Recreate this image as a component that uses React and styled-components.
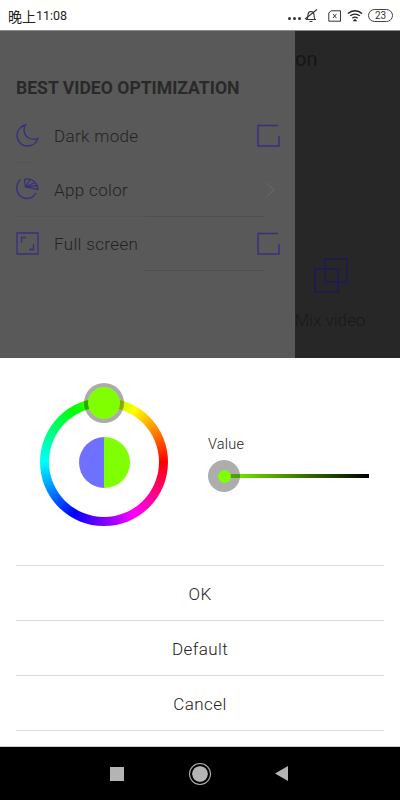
import React from 'react';
import styled, { createGlobalStyle } from 'styled-components';

const GlobalStyle = createGlobalStyle`
  html, body {
    margin: 0;
    padding: 0;
    background: #fff;
    font-family: Roboto, "Noto Sans CJK SC", sans-serif;
  }
  * { box-sizing: border-box; }
`;

const Screen = styled.div`
  width: 400px;
  height: 800px;
  display: flex;
  flex-direction: column;
  overflow: hidden;
`;

/* status bar */
const StatusBar = styled.div`
  height: 30px;
  flex: none;
  display: flex;
  align-items: center;
  padding: 1px 7px 0 8px;
  background: #fff;
  color: #222;
`;

const Clock = styled.span`
  font-size: 14px;
  display: flex;
  align-items: center;
`;

const ClockDigits = styled.span`
  font-size: 12.5px;
  letter-spacing: 0;
`;

const StatusIcons = styled.div`
  margin-left: auto;
  display: flex;
  align-items: center;
`;

const Dots = styled.span`
  display: flex;
  gap: 2px;
  margin-right: 3px;
  margin-top: 6px;
  > i {
    width: 3px;
    height: 3px;
    border-radius: 50%;
    background: #333;
  }
`;

const StatusGap = styled.span`
  width: ${(p) => p.$w}px;
`;

const Battery = styled.span`
  width: 25px;
  height: 13px;
  margin-left: 5px;
  border: 1px solid #444;
  border-radius: 7px;
  font-size: 10px;
  line-height: 11px;
  text-align: center;
  color: #333;
`;

/* dimmed page behind the sheet */
const Backdrop = styled.div`
  height: 328px;
  flex: none;
  display: flex;
  border-top: 1px solid #8a8a8a;
`;

const Drawer = styled.div`
  width: 295px;
  flex: none;
  padding: 45px 16px 0;
  background: #595959;
`;

const DrawerTitle = styled.div`
  height: 24px;
  margin-bottom: 9px;
  font-size: 17.6px;
  font-weight: 700;
  line-height: 24px;
  color: #292929;
`;

const OptionRow = styled.div`
  height: 54px;
  position: relative;
  display: flex;
  align-items: center;
  width: 248px;
  padding-bottom: 1px;
  &::after {
    content: '';
    position: absolute;
    left: ${(p) => p.$lineFrom}px;
    right: ${(p) => p.$lineEnd}px;
    bottom: 0;
    height: 1px;
    background: ${(p) => p.$lineColor};
  }
`;

const OptionIcon = styled.svg`
  width: 23px;
  height: 23px;
  flex: none;
  fill: none;
  stroke: #37317c;
  stroke-width: 1.3;
`;

const OptionLabel = styled.span`
  margin-left: 15px;
  font-size: 17px;
  font-weight: 300;
  letter-spacing: 0.35px;
  color: #232323;
`;

const OptionEnd = styled.svg`
  position: absolute;
  left: 240px;
  top: 50%;
  margin-top: -12px;
  width: 24px;
  height: 24px;
  fill: none;
  stroke: ${(p) => p.$stroke};
  stroke-width: 1.5;
`;

const PageRest = styled.div`
  flex: 1;
  display: flex;
  flex-direction: column;
  overflow: hidden;
  background: #272727;
  color: #191919;
`;

const PageTitle = styled.div`
  height: 60px;
  padding-top: 15px;
  font-size: 20px;
  line-height: 26px;
  color: #161616;
`;

const MixTile = styled.div`
  margin-top: 167px;
  margin-left: -1px;
  display: flex;
  flex-direction: column;
  align-items: center;
  width: 72px;
  font-size: 17px;
  font-weight: 300;
  white-space: nowrap;
  svg {
    width: 34px;
    height: 35px;
    fill: none;
    stroke: #1f1b4d;
    stroke-width: 2;
    margin-bottom: 17px;
    margin-left: 2px;
  }
`;

/* colour picker sheet */
const Sheet = styled.div`
  flex: 1;
  background: #fff;
  display: flex;
  flex-direction: column;
`;

const Picker = styled.div`
  height: 207px;
  flex: none;
  display: flex;
`;

const Wheel = styled.div`
  position: relative;
  width: 128px;
  height: 128px;
  margin: 40px 0 0 40px;
  flex: none;
  display: flex;
  align-items: center;
  justify-content: center;
  border-radius: 50%;
  background: conic-gradient(
    #80ff00 0deg,
    #ffff00 30deg,
    #ff8000 60deg,
    #ff0000 90deg,
    #ff00ff 150deg,
    #0000ff 210deg,
    #00ffff 270deg,
    #00ff00 330deg,
    #80ff00 360deg
  );
  &::before {
    content: '';
    position: absolute;
    inset: 9px;
    border-radius: 50%;
    background: #fff;
  }
`;

const WheelThumb = styled.div`
  position: absolute;
  left: 44px;
  top: -15px;
  width: 40px;
  height: 40px;
  border-radius: 50%;
  background: #7fff00;
  background-clip: padding-box;
  border: 4.5px solid rgba(0, 0, 0, 0.33);
`;

const Preview = styled.div`
  position: relative;
  width: 51px;
  height: 51px;
  border-radius: 50%;
  background: linear-gradient(90deg, #7070ff 50%, #7fff00 50%);
`;

const ValueBox = styled.div`
  flex: 1;
  padding: 78px 31px 0 40px;
`;

const ValueLabel = styled.div`
  height: 18px;
  font-size: 14.5px;
  font-weight: 300;
  line-height: 18px;
  letter-spacing: 0.2px;
  color: #222;
`;

const ValueTrack = styled.div`
  position: relative;
  height: 4px;
  margin-top: 20px;
  margin-left: 15px;
`;

const ValueFill = styled.div`
  position: absolute;
  inset: 0;
  background: linear-gradient(90deg, #7fff00, #000);
`;

const ValueThumb = styled.div`
  position: absolute;
  left: -15px;
  top: -14px;
  width: 32px;
  height: 32px;
  border-radius: 50%;
  display: flex;
  align-items: center;
  justify-content: center;
  background: rgba(0, 0, 0, 0.32);
  &::after {
    content: '';
    width: 13px;
    height: 13px;
    border-radius: 50%;
    background: #7fff00;
  }
`;

const ActionList = styled.div`
  margin: 0 16px;
  border-top: 1px solid #dcdcdc;
`;

const Action = styled.div`
  height: 55px;
  padding-top: 2px;
  display: flex;
  align-items: center;
  justify-content: center;
  border-bottom: 1px solid #dcdcdc;
  font-size: 17px;
  font-weight: 300;
  letter-spacing: 0.4px;
  color: #222;
`;

/* android nav bar */
const NavBar = styled.div`
  height: 54px;
  flex: none;
  background: #000;
  border-top: 1px solid #ccc;
  display: flex;
  align-items: center;
  gap: 65.5px;
  padding-left: 110px;
`;

const NavSquare = styled.div`
  width: 14px;
  height: 14px;
  background: #b4b4b4;
`;

const NavHome = styled.div`
  width: 20px;
  height: 20px;
  border-radius: 50%;
  background: #b4b4b4;
  background-clip: padding-box;
  border: 2px solid #000;
  box-shadow: 0 0 0 1px #b4b4b4;
`;

const NavBack = styled.svg`
  width: 13px;
  height: 15px;
  fill: #b4b4b4;
`;

const BellOff = () => (
  <svg width="14" height="15" viewBox="0 0 14 15" fill="none" stroke="#333" strokeWidth="1.1">
    <path d="M2 11.500h10M3 11.500c1-1.500 .8-3 1-5 .2-1.800 1.500-3 3-3s2.800 1 3 3c.1 1.500 0 3.500 1 5M5.500 13.500h3" />
    <path d="M1 11 13 1.500" />
  </svg>
);

const SimX = () => (
  <svg width="13" height="12" viewBox="0 0 13 12" fill="none" stroke="#333" strokeWidth="1">
    <path d="M3 .8h9.500v10.400H.8V3z" />
    <path d="M5 4 8.400 8M8.400 4 5 8" />
  </svg>
);

const Wifi = () => (
  <svg width="16" height="13" viewBox="0 0 17 13" fill="none" stroke="#222" strokeWidth="1.4">
    <path d="M1 4.300c4.300-3.800 10.700-3.800 15 0M3.300 6.900c3-2.600 7.400-2.600 10.400 0M5.700 9.400c1.600-1.300 4-1.300 5.600 0" />
    <path d="M8.500 11 7.700 11.800h1.600z" fill="#222" />
  </svg>
);

const Moon = () => (
  <OptionIcon viewBox="0 0 23 23">
    <path d="M9.500 1C4.500 2 1 6.200 1 11.500 1 17.300 5.700 22 11.500 22c4.800 0 9-3.100 10.500-7.500-1.200.6-2.600.9-4 .9-5.500 0-10-4-10-9.400 0-1.800.6-3.700 1.500-5z" />
  </OptionIcon>
);

const Palette = () => (
  <OptionIcon viewBox="0 0 23 23">
    <path d="M4.500 1.500C2 3.500.8 7 .8 10.500c0 5.500 4.500 10 10 10 3.800 0 7.200-2 9-5.500" />
    <path d="M9.500 9 8.500 1.500C13.500-.5 21 3 22 11.500z" />
    <path d="M9.500 9 14 1.500M9.500 9 19 4.500M9.500 9 22 7.500" />
  </OptionIcon>
);

const FullFrame = () => (
  <OptionIcon viewBox="0 0 23 23">
    <path d="M1 1h21v21H1z" />
    <path d="M10 5.500H5.500V11M13 17.500h4.500V12" />
  </OptionIcon>
);

const CheckBox = () => (
  <OptionEnd viewBox="0 0 24 24" $stroke="#37317c">
    <path d="M22 1.500H2v20.500h21V12" />
  </OptionEnd>
);

const Chevron = () => (
  <OptionEnd viewBox="0 0 24 24" $stroke="#646464">
    <path d="M10 5l8 7-8 7" />
  </OptionEnd>
);

const App = () => (
  <Screen>
    <GlobalStyle />
    <StatusBar>
      <Clock>
        晚上<ClockDigits>11:08</ClockDigits>
      </Clock>
      <StatusIcons>
        <Dots>
          <i />
          <i />
          <i />
        </Dots>
        <BellOff />
        <StatusGap $w={10} />
        <SimX />
        <StatusGap $w={6} />
        <Wifi />
        <Battery>23</Battery>
      </StatusIcons>
    </StatusBar>

    <Backdrop>
      <Drawer>
        <DrawerTitle>BEST VIDEO OPTIMIZATION</DrawerTitle>
        <OptionRow $lineFrom={0} $lineEnd={232} $lineColor="#535353">
          <Moon />
          <OptionLabel>Dark mode</OptionLabel>
          <CheckBox />
        </OptionRow>
        <OptionRow
          $lineFrom={0}
          $lineEnd={0}
          $lineColor="linear-gradient(90deg, #555 52%, #4e4e4e 52%)"
        >
          <Palette />
          <OptionLabel>App color</OptionLabel>
          <Chevron />
        </OptionRow>
        <OptionRow $lineFrom={128} $lineEnd={0} $lineColor="#4f4f4f">
          <FullFrame />
          <OptionLabel>Full screen</OptionLabel>
          <CheckBox />
        </OptionRow>
      </Drawer>
      <PageRest>
        <PageTitle>on</PageTitle>
        <MixTile>
          <svg viewBox="0 0 34 35">
            <path d="M11 1h22v23H11z" />
            <path d="M1 11h23v23H1z" />
          </svg>
          Mix video
        </MixTile>
      </PageRest>
    </Backdrop>

    <Sheet>
      <Picker>
        <Wheel>
          <Preview />
          <WheelThumb />
        </Wheel>
        <ValueBox>
          <ValueLabel>Value</ValueLabel>
          <ValueTrack>
            <ValueFill />
            <ValueThumb />
          </ValueTrack>
        </ValueBox>
      </Picker>
      <ActionList>
        <Action>OK</Action>
        <Action>Default</Action>
        <Action>Cancel</Action>
      </ActionList>
    </Sheet>

    <NavBar>
      <NavSquare />
      <NavHome />
      <NavBack viewBox="0 0 13 15">
        <path d="M13 0v15L0 7.500z" />
      </NavBack>
    </NavBar>
  </Screen>
);

export default App;
